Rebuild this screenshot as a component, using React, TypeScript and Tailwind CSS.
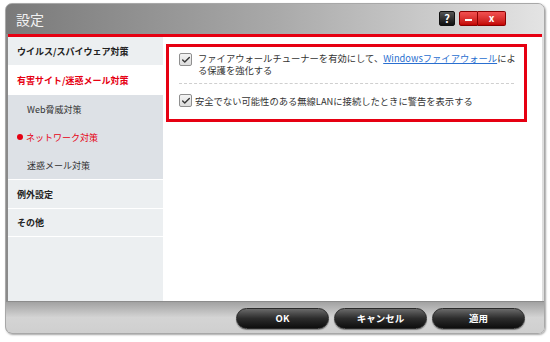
import { Check } from "lucide-react";

const jp = "font-['Noto_Sans_CJK_JP','Noto_Sans',sans-serif]";

const CheckBox = ({ className = "" }: { className?: string }) => (
  <span className={`flex h-[13px] w-[13px] shrink-0 items-center justify-center rounded-[2px] border border-[#8f8f8f] bg-gradient-to-b from-[#f4f4f4] to-[#dcdcdc] ${className}`}>
    <Check className="h-[10px] w-[10px] text-[#3a3a3a]" strokeWidth={3.5} />
  </span>
);

const DarkButton = ({ label }: { label: string }) => (
  <button className="flex h-[21px] w-[93px] items-center justify-center rounded-full border border-[#2a2a2a] bg-gradient-to-b from-[#6a6a6a] via-[#2c2c2c] to-[#0e0e0e] text-[9.5px] font-bold text-white shadow-[0_1px_1px_rgba(0,0,0,0.4)]">
    {label}
  </button>
);

export default function App() {
  return (
    <div className={`h-[342px] w-[550px] bg-white pl-[5px] pt-[3px] ${jp}`}>
      {/* Window frame */}
      <div className="flex h-[331px] w-[540px] flex-col overflow-hidden rounded-[7px] border border-[#a8a8a8] bg-gradient-to-r from-[#8a8a8a] via-[#b8b8b8] to-[#dedede] shadow-[1px_1px_2px_rgba(0,0,0,0.35)]">
        {/* Title bar */}
        <div className="flex h-[30px] shrink-0 items-center justify-between bg-gradient-to-r from-[#7a7a7a] via-[#a9a9a9] to-[#e4e4e4] pl-[10px] pr-[38px]">
          <span className="text-[14px] leading-none text-[#f2f2f2]">設定</span>
          <div className="flex items-center gap-[4px] pb-[2px]">
            <span className="flex h-[15px] w-[16px] items-center justify-center rounded-[2px] border border-[#111] bg-gradient-to-b from-[#555] to-[#111] text-[11px] font-bold leading-none text-white">?</span>
            <div className="flex">
              <span className="flex h-[15px] w-[19px] items-end justify-center rounded-l-[2px] border border-[#8a0000] bg-gradient-to-b from-[#f25050] to-[#c40000] pb-[4px]">
                <span className="h-[2px] w-[7px] bg-white" />
              </span>
              <span className="flex h-[15px] w-[28px] items-center justify-center rounded-r-[2px] border border-l-0 border-[#8a0000] bg-gradient-to-b from-[#f25050] to-[#c40000] text-[10px] font-bold leading-none text-white">x</span>
            </div>
          </div>
        </div>

        {/* Red rule */}
        <div className="mx-[2px] h-[3px] shrink-0 bg-[#e60012]" />

        {/* Body */}
        <div className="mx-[2px] flex h-[264px] shrink-0">
          {/* Sidebar */}
          <div className="flex w-[155px] shrink-0 flex-col bg-[#eceff1] text-[9px] leading-none">
            <div className="flex h-[28px] items-center pl-[9px] font-bold text-[#222]">ウイルス/スパイウェア対策</div>
            <div className="flex h-[30px] items-center bg-white pl-[9px] font-bold text-[#e60012]">有害サイト/迷惑メール対策</div>
            <div className="flex flex-col bg-[#dde1e6] text-[#333]">
              <div className="flex h-[28px] items-center pl-[19px]">Web脅威対策</div>
              <div className="flex h-[28px] items-center gap-[3px] pl-[9px] text-[#e60012]">
                <span className="h-[6px] w-[6px] rounded-full bg-[#e60012]" />
                <span>ネットワーク対策</span>
              </div>
              <div className="flex h-[28px] items-center pl-[19px]">迷惑メール対策</div>
            </div>
            <div className="flex h-[29px] items-center border-t border-white pl-[9px] font-bold text-[#222]">例外設定</div>
            <div className="flex h-[29px] items-center border-y border-white pl-[9px] font-bold text-[#222]">その他</div>
          </div>

          {/* Content */}
          <div className="flex-1 bg-white pl-[3px] pt-[7px]">
            <div className="w-[361px] border-[3px] border-[#e60012] px-[10px] text-[9.3px] leading-[12px] text-[#333]">
              <div className="flex items-start gap-[6px] pb-[7px] pt-[5px]">
                <CheckBox className="mt-px" />
                <p className="whitespace-nowrap">
                  ファイアウォールチューナーを有効にして、
                  <span className="text-[#2a6fd0] underline">Windowsファイアウォール</span>
                  によ
                  <br />
                  る保護を強化する
                </p>
              </div>
              <div className="border-t border-dashed border-[#cfcfcf]" />
              <div className="flex items-center gap-[3px] pb-[12px] pt-[10px]">
                <CheckBox />
                <p className="whitespace-nowrap">安全でない可能性のある無線LANに接続したときに警告を表示する</p>
              </div>
            </div>
          </div>
        </div>

        {/* Bottom bar */}
        <div className="flex flex-1 items-start justify-end gap-[5px] border-t border-[#8c8c8c] bg-gradient-to-b from-[#a2a2a2] via-[#d4d4d4] to-[#cfcfcf] pr-[19px] pt-[6px]">
          <DarkButton label="OK" />
          <DarkButton label="キャンセル" />
          <DarkButton label="適用" />
        </div>
      </div>
    </div>
  );
}
